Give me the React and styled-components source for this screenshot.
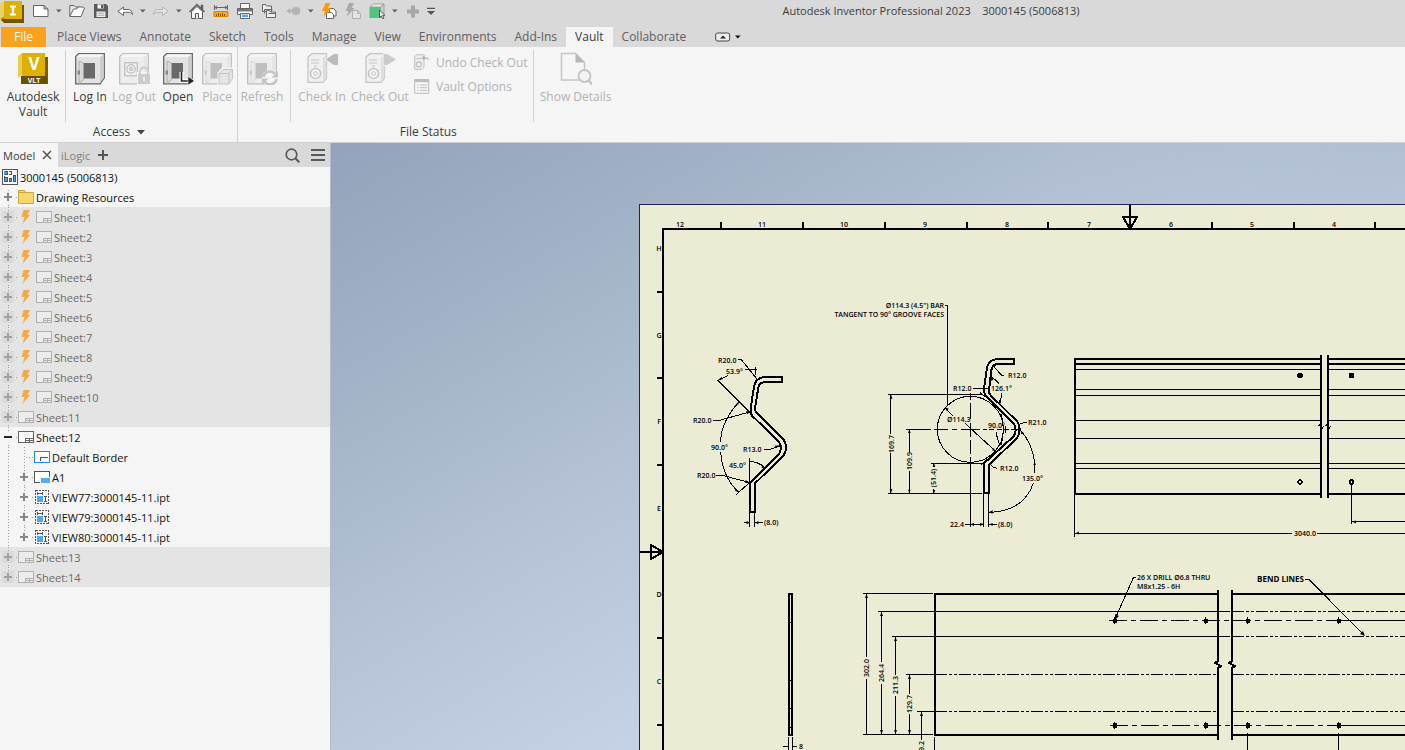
import React from "react";
import styled, { createGlobalStyle } from "styled-components";

const theme = {
  chrome: "#d9d9d9",
  panel: "#f5f5f5",
  shaded: "#e4e4e4",
  line: "#d0d0d0",
  ink: "#3c3c3c",
  soft: "#606060",
  muted: "#b2b2b2",
  orange: "#faa21b",
  paper: "#ececd5",
};

const GlobalStyle = createGlobalStyle`
  * {
    box-sizing: border-box;
  }
  body {
    margin: 0;
    font-family: "Open Sans", "Noto Sans", sans-serif;
    font-size: 12px;
    color: ${theme.ink};
    background: ${theme.panel};
  }
  button {
    font: inherit;
    color: inherit;
    border: 0;
    padding: 0;
    background: none;
  }
  svg {
    display: block;
    flex-shrink: 0;
  }
`;

const Window = styled.div`
  min-height: 100vh;
  display: flex;
  flex-direction: column;
`;

/* ---------- title bar ---------- */

const TitleBar = styled.header`
  display: flex;
  align-items: center;
  height: 27px;
  padding-bottom: 6px;
  background: ${theme.chrome};
`;

const Logo = styled.div`
  align-self: flex-start;
  width: 24px;
  height: 21px;
  margin-right: 5px;
`;

const ToolButton = styled.button`
  display: flex;
  justify-content: center;
  width: ${(p) => (p.$narrow ? 12 : 24)}px;
`;

const Title = styled.h1`
  flex: 1;
  margin: 0;
  padding-left: 20px;
  font-size: 11px;
  font-weight: 400;
  line-height: 21px;
  text-align: center;
  white-space: pre;
`;

const Caret = ({ color = "#606060" }) => (
  <svg width="6" height="4" viewBox="0 0 6 4">
    <path d="M0 0.5h5.6L2.8 3.6z" fill={color} />
  </svg>
);

const icons = {
  New: (
    <path d="M.5 2.500h10.500l4 3.500v7.500H.5zM11 2.500v3.500h4" fill="#fff" stroke="#666" />
  ),
  "Open file": (
    <g stroke="#666" strokeLinejoin="round">
      <path d="M.8 13V2.500h4.200l1.500 1.500h4v2" fill="#e8e8e8" />
      <path d="M.8 13.500L4.500 6h3l1.500-2h5l1.500 1-3.500 8.500z" fill="#fff" />
    </g>
  ),
  Save: (
    <g>
      <path d="M1 1h12l2 2v12H1z" fill="#5a5a5a" />
      <path d="M4.500 1.500h6v4h-6z" fill="#fff" />
      <path d="M8 2h2v3H8z" fill="#5a5a5a" />
      <path d="M3.500 8.500h9V14h-9z" fill="#f2f2f2" />
      <path d="M4.500 10.300h7M4.500 12.300h7" stroke="#aaa" />
    </g>
  ),
  Undo: (
    <path
      d="M.8 8.300L6.500 4v2.500h4.500c2.500 0 4 1.500 4.500 5-1-1.800-2.200-2.200-4.500-2.200H6.500v3.200z"
      fill="#fff"
      stroke="#666"
    />
  ),
  Redo: (
    <path
      d="M15.200 8.300L9.500 4v2.500H5c-2.500 0-4 1.500-4.500 5 1-1.800 2.200-2.200 4.500-2.200h4.500v3.200z"
      fill="#e6e6e6"
      stroke="#b4b4b4"
    />
  ),
  Home: (
    <g stroke="#5c5c5c">
      <path d="M2.500 8.500L8 3.500l5.500 5v7H2.500z" fill="#fff" />
      <path d="M.5 9L8 1.500 15.500 9M12.500 5.500V2.500h1v4" fill="none" strokeWidth="1.400" />
      <path d="M6.500 15.500v-5h3v5" fill="#eee" />
    </g>
  ),
  Measure: (
    <g>
      <path d="M1.500 2v5M14.500 2v5M2 4.500h12M4 3L2 4.500 4 6M12 3l2 1.500L12 6" stroke="#666" fill="none" />
      <path d="M1 8.500h14v5H1z" fill="#fba51c" stroke="#d98300" />
      <path d="M3.500 11v2M5.500 10v3M7.500 11v2M9.500 10v3M11.500 11v2" stroke="#8a5a10" />
    </g>
  ),
  Print: (
    <g>
      <path d="M3.500.5h9v5h-9z" fill="#fff" stroke="#666" />
      <path d="M.5 5.500h15v6H.5z" fill="#fff" stroke="#666" />
      <path d="M1 6h14v2.500H1z" fill="#777" />
      <path d="M3.500 10.500h9v5h-9z" fill="#fff" stroke="#666" />
      <path d="M5 11.500h6v2.500H5z" fill="#55aaf0" />
    </g>
  ),
  Windows: (
    <g fill="#eee" stroke="#666">
      <path d="M1.500 8.500v-7h3l1 1.500h5v5.500z" />
      <path d="M3.500 10.500v-4h8" fill="none" />
      <path d="M5.500 14.500v-7h3l1 1.500h5v5.500z" />
      <path d="M7.500 10.500h7" />
    </g>
  ),
  Return: (
    <g fill="#b4b4b4">
      <circle cx="11" cy="8" r="4.300" />
      <path d="M1 8l4.500-3v2h4v2h-4v2z" />
    </g>
  ),
  Update: (
    <g>
      <path d="M8.500 9V5.500h4l2.500 2.500v5h-3" fill="#fff" stroke="#666" />
      <path d="M5.500 9.500h5l2 2v4h-7z" fill="#fff" stroke="#666" />
      <path d="M4.500 0h5L7 5h3L2.500 14 4 8H1z" fill="#fa9a10" />
    </g>
  ),
  "Local update": (
    <g>
      <path d="M7.500 7.500h5l3 3v5h-8zM12.500 7.500v3h3" fill="#e4e4e4" stroke="#b0b0b0" />
      <path d="M4 0h5L6.500 5h3L1.500 14 3.500 8H.5z" fill="#a9a9a9" />
    </g>
  ),
  Select: (
    <g>
      <path d="M1 4l3.500-3H15l-3.500 3z" fill="#eee" stroke="#888" strokeWidth=".7" />
      <path d="M11.500 4L15 1v10l-3.500 4z" fill="#ccc" stroke="#888" strokeWidth=".7" />
      <path d="M.5 4h11v11H.5z" fill="#52c47e" />
      <path d="M10.500 7v7.500l1.800-1.600 1.300 2.800 1.400-.7-1.300-2.600h2.200z" fill="#fff" stroke="#333" strokeWidth=".8" />
    </g>
  ),
  Add: <path d="M6 2.500h4v4h4v4h-4v4H6v-4H2v-4h4z" fill="#a6a6a6" />,
  "Customize toolbar": (
    <path d="M4 4.800h8v1.200H4zM4 8h8l-4 4z" fill="#555" />
  ),
};

const Tool = ({ name }) =>
  name === "|" ? (
    <ToolButton $narrow aria-label="More">
      <Caret />
    </ToolButton>
  ) : (
    <ToolButton aria-label={name} $narrow={name === "Customize toolbar"}>
      <svg width="16" height="16" viewBox="0 0 16 16" fill="none">
        {icons[name]}
      </svg>
    </ToolButton>
  );

const tools = [
  "New", "|", "Open file", "Save", "Undo", "|", "Redo", "|", "Home", "Measure",
  "Print", "Windows", "Return", "|", "Update", "Local update", "Select", "|",
  "Add", "Customize toolbar",
];

/* ---------- ribbon tabs ---------- */

const TabStrip = styled.nav`
  display: flex;
  height: 20px;
  padding-left: 1px;
  background: ${theme.chrome};
`;

const Tab = styled.button`
  padding: 0 9px;
  line-height: 20px;
  color: ${(p) => (p.$active ? theme.ink : theme.soft)};
  background: ${(p) => (p.$active ? theme.panel : "none")};
`;

const FileTab = styled(Tab)`
  width: 45px;
  margin-right: 2px;
  color: #fff;
  background: ${theme.orange};
`;

const Minimize = styled.button`
  display: flex;
  align-items: center;
  gap: 4px;
  margin-left: 20px;
`;

const tabs = [
  "Place Views", "Annotate", "Sketch", "Tools", "Manage", "View",
  "Environments", "Add-Ins", "Vault", "Collaborate",
];

/* ---------- ribbon ---------- */

const Ribbon = styled.section`
  display: flex;
  height: 96px;
  padding-left: 1px;
  background: ${theme.panel};
  border-bottom: 1px solid ${theme.line};
`;

const Group = styled.div`
  display: flex;
  flex-direction: column;
  & + & {
    border-left: 1px solid ${theme.line};
  }
`;

const GroupTools = styled.div`
  display: flex;
  flex: 1;
  padding: 3px 3px 0 0;
`;

const GroupTitle = styled.div`
  display: flex;
  justify-content: center;
  align-items: center;
  gap: 7px;
  line-height: 20px;
`;

const Divider = styled.span`
  width: 1px;
  margin: 0 2px 0 ${(p) => p.$gap || 0}px;
  background: ${theme.line};
`;

const BigButton = styled.button`
  display: flex;
  flex-direction: column;
  align-items: center;
  gap: 4px;
  width: ${(p) => p.$width}px;
  padding-top: 2px;
  line-height: 15px;
  white-space: nowrap;
  &:disabled {
    color: ${theme.muted};
  }
  &:disabled svg {
    opacity: 0.38;
  }
`;

const SmallButtons = styled.div`
  display: flex;
  flex-direction: column;
  padding: 0 5px;
`;

const SmallButton = styled.button`
  display: flex;
  align-items: center;
  gap: 6px;
  height: 24px;
  &:disabled {
    color: ${theme.muted};
  }
  &:disabled svg {
    opacity: 0.4;
  }
`;

const Icon32 = ({ children }) => (
  <svg width="32" height="33" viewBox="0 0 32 33" fill="none">
    {children}
  </svg>
);

const SafeBox = ({ closed }) => (
  <g>
    <path d="M1.700 4.500L4.800 1.700h25.500v24.300L26 31.800H1.700z" fill="#e2e2e2" stroke="#666" strokeWidth="1.300" />
    <path d="M26 5L29.700 2.200v23.800L26 31z" fill="#cdcdcd" />
    <path d="M2.500 5L5 2.300h24.500L26 5z" fill="#f6f6f6" />
    {closed ? (
      <g stroke="#777" strokeWidth="1.400">
        <path d="M6.700 10.700h12.600v13H6.700z" fill="#eee" />
        <circle cx="13" cy="17" r="4.200" />
        <circle cx="13" cy="17" r="1.500" />
      </g>
    ) : (
      <g>
        <path d="M9 11h12v15.500H9z" fill="#696969" />
        <path d="M5 9l4.500 2v16.500L5 31.500z" fill="#d8d8d8" stroke="#a4a4a4" strokeWidth=".8" />
        <path d="M3.500 18.500h2.500v4H3.500z" fill="#888" />
      </g>
    )}
  </g>
);

const VaultIcon = () => (
  <Icon32>
    <path d="M1 4l4-3v22l-4 3z" fill="#eccb52" />
    <path d="M28 5h3v27h-3z" fill="#7a6000" />
    <path d="M5 1h23v23H5z" fill="#e0b000" />
    <path d="M4 24h26v8H4z" fill="#6b5200" />
    <text x="17" y="18" fontSize="17" fontWeight="700" fill="#fff" textAnchor="middle">V</text>
    <text x="17" y="31" fontSize="7" fontWeight="700" fill="#fff" textAnchor="middle">VLT</text>
  </Icon32>
);

const LogOutIcon = () => (
  <Icon32>
    <SafeBox closed />
    <path d="M19 20h13v13H19z" fill="#f5f5f5" />
    <path d="M22 22v-2.500a4 4 0 0 1 8 0V22" stroke="#888" strokeWidth="1.800" />
    <path d="M20 22h12v10H20z" fill="#888" />
    <path d="M26 25v4" stroke="#fff" strokeWidth="1.500" />
  </Icon32>
);

const OpenIcon = () => (
  <Icon32>
    <SafeBox />
    <path d="M19.500 20v9h8" stroke="#fff" strokeWidth="4" />
    <path d="M19.500 20v9h8" stroke="#222" strokeWidth="1.600" />
    <path d="M26 24.500l6.500 4.500-6.500 4z" fill="#222" stroke="#fff" strokeWidth=".5" />
  </Icon32>
);

const PlaceIcon = () => (
  <Icon32>
    <SafeBox />
    <path d="M17.500 21l4-4.500h11v10.500L28 32.500H17.500z" fill="#ddd" stroke="#f5f5f5" strokeWidth="2" />
    <path d="M18 21.500L22 17.500h9.500v9L28 32H18z" fill="#ccc" stroke="#777" />
    <path d="M18 21.500h10V32M28 21.500l3.500-4" stroke="#777" />
  </Icon32>
);

const RefreshIcon = () => (
  <Icon32>
    <SafeBox />
    <circle cx="24" cy="26" r="8" fill="#f5f5f5" />
    <path d="M17.500 25a6.500 6.500 0 0 1 11.500-3M30.500 27a6.500 6.500 0 0 1-11.500 3" stroke="#777" strokeWidth="2.600" />
    <path d="M32 19v6.500h-6.500zM16 33v-6.500h6.500z" fill="#777" />
  </Icon32>
);

const Speaker = () => (
  <g>
    <path d="M2 5l4-3.300h14.500v24.300L17 30.300H2z" fill="#e8e8e8" stroke="#777" strokeWidth="1.300" />
    <path d="M17 6l3.500-4v24L17 30z" fill="#bbb" />
    <path d="M5 8h8M5 11h8" stroke="#777" />
    <circle cx="9.500" cy="21.500" r="5" fill="#fff" stroke="#777" strokeWidth="1.600" />
    <circle cx="9.500" cy="21.500" r="2" stroke="#777" />
    <path d="M8 13.500h3L9.500 15.500z" fill="#777" />
  </g>
);

const CheckInIcon = () => (
  <Icon32>
    <Speaker />
    <path d="M33 1.500H28L19 7.500l9 6h5z" fill="#606060" stroke="#f5f5f5" />
  </Icon32>
);

const CheckOutIcon = () => (
  <Icon32>
    <Speaker />
    <path d="M19 1.500h4l10 6-10 6h-4z" fill="#888" stroke="#f5f5f5" />
  </Icon32>
);

const DetailsIcon = () => (
  <Icon32>
    <path d="M1.500 1.500h14l9 9v17.500H1.500z" fill="#fafafa" stroke="#777" strokeWidth="1.400" />
    <path d="M15.500 1.500v9h9z" fill="#555" />
    <circle cx="24.500" cy="24" r="6" fill="#f0f0f0" stroke="#777" strokeWidth="1.800" />
    <path d="M28.500 28.500l4 4" stroke="#777" strokeWidth="2.500" />
  </Icon32>
);

const UndoCheckOutIcon = () => (
  <svg width="16" height="16" viewBox="0 0 16 16" fill="none">
    <path d="M.7 2.500L3 .8h7V13L8 15.300H.7z" fill="#e4e4e4" stroke="#777" />
    <path d="M2.500 4.500H7" stroke="#777" />
    <circle cx="4.800" cy="10.500" r="2.500" stroke="#777" strokeWidth="1.300" />
    <path d="M7 4l4-3.500V3c3 0 4.500 1 4.500 4-1-1.500-2-2-4.500-2v2.500z" fill="#555" stroke="#f5f5f5" strokeWidth=".5" />
  </svg>
);

const OptionsIcon = () => (
  <svg width="16" height="16" viewBox="0 0 16 16" fill="none">
    <path d="M.7 1.500h14v13.800H.7z" fill="#fafafa" stroke="#666" />
    <path d="M.7 1h14v3.200H.7z" fill="#666" />
    <path d="M3 7h1.500M6 7h7M3 9.700h1.500M6 9.700h7M3 12.400h1.500M6 12.400h7" stroke="#666" />
  </svg>
);

/* ---------- browser panel ---------- */

const Main = styled.main`
  display: flex;
  flex: 1;
`;

const Browser = styled.aside`
  width: 331px;
  flex-shrink: 0;
  border-right: 1px solid #b4bccb;
  font-size: 11px;
  background: ${theme.panel};
`;

const BrowserTabs = styled.div`
  display: flex;
  align-items: center;
  height: 24px;
  background: ${theme.chrome};
`;

const BrowserTab = styled.div`
  display: flex;
  align-items: center;
  justify-content: space-between;
  gap: 6px;
  height: 24px;
  padding: 0 5px 0 3px;
  width: ${(p) => (p.$active ? "58px" : "auto")};
  color: ${(p) => (p.$active ? theme.ink : "#808080")};
  background: ${(p) => (p.$active ? theme.panel : "none")};
`;

const IconButton = styled.button`
  display: flex;
  justify-content: center;
  width: ${(p) => (p.$wide ? 25 : 14)}px;
`;

const Spacer = styled.span`
  flex: 1;
`;

const Tree = styled.ul`
  margin: 0;
  padding: 0;
  list-style: none;
`;

const Row = styled.li`
  display: flex;
  align-items: center;
  height: 20px;
  padding-left: ${(p) => (p.$root ? 2 : 0)}px;
  color: ${(p) => (p.$off ? "#6a6a6a" : "#111")};
  background: ${(p) => (p.$off ? theme.shaded : "none")};
  svg.faded {
    opacity: 0.4;
  }
`;

const RowLabel = styled.span`
  padding: 2px 0 0 2px;
  line-height: 18px;
`;

const Guide = () => (
  <svg width="16" height="20">
    <path d="M8.500 0v20" stroke="#a0a0a0" strokeDasharray="1 2" shapeRendering="crispEdges" />
  </svg>
);

const Toggle = ({ sign, off, last, first }) => (
  <svg width="18" height="20" shapeRendering="crispEdges">
    <path
      d={`M8.500 ${first ? 3 : 0}V${last ? 10 : 20}M10 10.500h8`}
      stroke="#a0a0a0"
      strokeDasharray="1 2"
    />
    {sign && <path d="M2 4h12v12H2z" fill={off ? "#dadada" : theme.panel} />}
    {sign && <path d="M4 9h8v2H4z" fill={sign === "-" ? "#222" : off ? "#a2a2a2" : "#888"} />}
    {sign === "+" && <path d="M7 6h2v8H7z" fill={off ? "#a2a2a2" : "#888"} />}
  </svg>
);

const BoltIcon = () => (
  <svg width="18" height="20" viewBox="0 0 18 20">
    <path d="M5.500 3H12L9.500 8H12L4.500 17l2-7H3.500z" fill="#f3a945" />
  </svg>
);

const SheetIcon = ({ faded }) => (
  <svg className={faded ? "faded" : undefined} width="16" height="12" viewBox="0 0 16 12" fill="none" shapeRendering="crispEdges">
    <path d="M.5.5h15v11H.5z" stroke="#666" fill="#fafafa" />
    <path d="M7.500 11.500v-4h8M7.500 9.500h8M11.500 7.500v4" stroke="#666" />
  </svg>
);

const nodeIcons = {
  root: (
    <svg width="16" height="16" viewBox="0 0 16 16" fill="none" shapeRendering="crispEdges">
      <path d="M.5.5h15v15H.5z" fill="#fff" stroke="#555" />
      <path d="M2 2h4v4H2zM2 9h4v4H2zM7 10h3v3H7zM11 7h3v6h-3z" fill="#4aa3e6" />
      <path d="M2.500 2.500h3v3h-3M7 2.500h2v3H7M2.500 7v5.500h3v-4h-3M7.500 9.500h2v3h-2zM11.500 6.500h2v6h-2z" stroke="#555" />
    </svg>
  ),
  folder: (
    <svg width="16" height="14" viewBox="0 0 16 14">
      <path d="M.5.500h6l1 2h8v11H.5z" fill="#f5d76e" stroke="#c9a640" />
      <path d="M1 2.500h6.500" stroke="#c9a640" />
    </svg>
  ),
  border: (
    <svg width="16" height="12" viewBox="0 0 16 12" fill="none" shapeRendering="crispEdges">
      <path d="M.5.500h15v11H.5z" fill="#fff" stroke="#1e8be0" />
      <path d="M6.500 10V6.500H14" stroke="#555" />
    </svg>
  ),
  title: (
    <svg width="16" height="12" viewBox="0 0 16 12" fill="none" shapeRendering="crispEdges">
      <path d="M6 11.500H.5V.500h15V6" fill="#fff" stroke="#555" />
      <path d="M7 7h9v5H7z" fill="#5aaee8" />
    </svg>
  ),
  view: (
    <svg width="16" height="14" viewBox="0 0 16 14" fill="none" shapeRendering="crispEdges">
      <path d="M1.500.500h13v13h-13z" stroke="#555" strokeDasharray="2 1" />
      <path d="M3 6h6v6H3z" fill="#4fa8e8" />
      <path d="M3.500 2v3M8.500 2v3M4 3.500h4M10 6.500h3M10 11.500h3M11.500 7v4" stroke="#555" />
    </svg>
  ),
};

const sheet = (n, bolt) => ({ label: `Sheet:${n}`, sign: "+", off: true, bolt });

const nodes = [
  { label: "Drawing Resources", sign: "+", icon: "folder", first: true },
  ...[1, 2, 3, 4, 5, 6, 7, 8, 9, 10].map((n) => sheet(n, true)),
  sheet(11),
  { label: "Sheet:12", sign: "-" },
  { label: "Default Border", icon: "border", child: true },
  { label: "A1", sign: "+", icon: "title", child: true },
  { label: "VIEW77:3000145-11.ipt", sign: "+", icon: "view", child: true },
  { label: "VIEW79:3000145-11.ipt", sign: "+", icon: "view", child: true },
  { label: "VIEW80:3000145-11.ipt", sign: "+", icon: "view", child: true, last: true },
  sheet(13),
  { ...sheet(14), last: true },
];

const TreeNode = ({ node }) => (
  <Row $off={node.off} role="treeitem">
    {node.child && <Guide />}
    <Toggle sign={node.sign} off={node.off} last={node.last} first={node.first} />
    {node.bolt && <BoltIcon />}
    {node.icon ? nodeIcons[node.icon] : <SheetIcon faded={node.off} />}
    <RowLabel>{node.label}</RowLabel>
  </Row>
);

/* ---------- drawing ---------- */

const Canvas = styled.section`
  display: flex;
  flex: 1;
  min-width: 0;
  overflow: hidden;
  background: radial-gradient(
      ellipse 40% 60% at 100% 0%,
      rgba(160, 176, 200, 0.4),
      rgba(160, 176, 200, 0) 80%
    ),
    linear-gradient(150deg, #94a3bb 0%, #a4b3c8 22%, #b9c6da 46%, #c7d3e6 66%);
`;

const Sheet = styled.svg`
  flex: 1;
  min-width: 0;
  font-family: "Open Sans", "Noto Sans", sans-serif;
  font-size: 7px;
  font-weight: 600;
  shape-rendering: crispEdges;
  path,
  circle {
    fill: none;
    stroke: #000;
    vector-effect: non-scaling-stroke;
  }
  .thick {
    stroke-width: 2px;
  }
  .solid {
    fill: #000;
  }
  .arrow {
    fill: #000;
    stroke: none;
    shape-rendering: auto;
  }
  .chain {
    stroke-dasharray: 12 2 3 2 3 2;
  }
  .centre {
    stroke-dasharray: 18 4 5 4;
  }
  .break {
    stroke-linejoin: round;
  }
`;

const Dim = ({ x, y, up, ...rest }) => (
  <text
    x={x}
    y={y}
    {...(up ? { transform: `rotate(-90 ${x} ${y})`, textAnchor: "middle" } : {})}
    {...rest}
  />
);

// sections are plotted at three units to the pixel
const Plot = ({ x, y, children }) => (
  <g transform={`translate(${x} ${y}) scale(0.33333)`}>{children}</g>
);

const columns = [12, 11, 10, 9, 8, 7, 6, 5, 4];
const zones = ["H", "G", "F", "E", "D", "C"];

const Frame = () => (
  <g>
    <rect x="639" y="204" width="900" height="700" fill={theme.paper} />
    <path d="M639.500 760V204.500H1500" style={{ stroke: "#23234f" }} />
    <path className="thick" d="M663 760V229H1500" />
    <path
      className="thick"
      d="M721 222v7M803 222v7M885 222v7M967 222v7M1048 222v7M1212 222v7M1294 222v7M1375 222v7"
    />
    <path className="thick" d="M657 292h6M657 378h6M657 465h6M657 638h6M657 725h6" />
    <path className="thick" d="M1130 205v23M1123 217h14l-7 12z" />
    <path className="thick" d="M640 552h22M651 545v14l12-7z" />
    {columns.map((n, i) => (
      <text key={n} x={680 + Math.round(i * 81.75)} y="227" textAnchor="middle">
        {n}
      </text>
    ))}
    {zones.map((z, i) => (
      <text key={z} x="659" y={251 + Math.round(i * 86.6)} textAnchor="middle">
        {z}
      </text>
    ))}
  </g>
);

const BendSection = () => (
  <g>
    <Plot x={635} y={200}>
      <path
        className="thick"
        d="M440 531H388Q360 535 357 560L347 625Q345 640 352 648L432 725Q443 742 432 762L345 850V936H360V850L445 768Q462 742 445 718L366 640Q360 634 360 625L370 562Q373 548 388 547H440Z"
      />
      <path d="M308 480H320L365 536M330 508H366M363 500V525M278 527L248 542M248 540L345 637" />
      <path d="M233 662H250L347 635M312 606Q258 665 257 725M257 755Q262 830 310 876M303 884L347 845" />
      <path d="M386 748H405L437 737M343 775V850M345 785Q370 785 390 803M242 825L262 826L345 848" />
      <path d="M345 940V980M359 940V980M328 968H345M360 968H383" />
      <path className="arrow" d="M304 610L312 606L309 616ZM303 868L310 876L300 872ZM382 795L391 803L380 804ZM420 737L437 736L422 745ZM332 840L345 848L330 849ZM334 633L347 635L336 643ZM248 541L260 531L263 538ZM335 963L345 968L335 973ZM370 963L360 968L370 973Z" />
    </Plot>
    <Dim x={718} y={363}>R20.0</Dim>
    <Dim x={726} y={374}>53.9°</Dim>
    <Dim x={693} y={423}>R20.0</Dim>
    <Dim x={711} y={450}>90.0°</Dim>
    <Dim x={743} y={452}>R13.0</Dim>
    <Dim x={729} y={468}>45.0°</Dim>
    <Dim x={697} y={478}>R20.0</Dim>
    <Dim x={764} y={525}>(8.0)</Dim>
  </g>
);

const GrooveSection = () => (
  <g>
    <Plot x={820} y={290}>
      <path
        className="thick"
        d="M583 207H530Q503 210 500 240L492 295Q490 308 500 320L582 402Q592 418 582 438L492 520V610H508V524L592 443Q606 418 592 395L512 316Q506 308 507 300L514 240Q517 224 532 222H583Z"
      />
      <circle cx="451" cy="418" r="99" />
      <path d="M374 48H382V345M375 352L398 378M435 400L527 484" />
      <path d="M204 313H490M213 313V433M213 490V610M204 610H486" />
      <path d="M258 418H334M343 418H384M395 418H412M422 418H480M488 418H500M508 418H522M530 418H545M552 418H566M558 409V428M574 418H600" />
      <path d="M268 418V486M268 542V610M333 520H488M342 520V532M342 596V610" />
      <path d="M451 310V330M451 340V388M451 398V440M451 450V492M451 500V712M435 703H492M508 703H530M492 610V712M505 610V712" />
      <path d="M458 297H506M553 256H545L522 230M514 262Q527 268 537 281M545 308Q547 325 535 338" />
      <path d="M543 372Q557 418 543 466M530 427Q530 450 542 466M622 397L603 400L594 406M532 535L520 532L508 520" />
      <path d="M600 418Q640 465 644 520V548M640 580Q610 665 506 667M480 308L510 330M485 524L500 508" />
      <path className="arrow" d="M209 326L213 313L217 326ZM209 597L213 610L217 597ZM264 599L268 610L272 599ZM264 429L268 418L272 429ZM338 531L342 520L346 531ZM338 600L342 610L346 600ZM506 667L518 661L518 671ZM640 525L644 516L648 525ZM480 699L492 703L480 708ZM462 699L451 703L462 708ZM518 699L508 703L518 708Z" />
      <path className="arrow" d="M374 351L386 356L380 363ZM527 484L521 474L516 481ZM538 370L547 374L541 382ZM602 422L611 428L604 433ZM513 262L521 270L512 272ZM534 338L543 332L543 340Z" />
    </Plot>
    <Dim x={944} y={308} textAnchor="end">Ø114.3 (4.5") BAR</Dim>
    <Dim x={944} y={317} textAnchor="end">TANGENT TO 90° GROOVE FACES</Dim>
    <Dim x={1008} y={378}>R12.0</Dim>
    <Dim x={953} y={391}>R12.0</Dim>
    <Dim x={991} y={391}>126.1°</Dim>
    <Dim x={947} y={422}>Ø114.3</Dim>
    <Dim x={988} y={428}>90.0°</Dim>
    <Dim x={1028} y={425}>R21.0</Dim>
    <Dim x={1000} y={471}>R12.0</Dim>
    <Dim x={1022} y={481}>135.0°</Dim>
    <Dim x={950} y={527}>22.4</Dim>
    <Dim x={998} y={527}>(8.0)</Dim>
    <Dim x={894} y={444} up>169.7</Dim>
    <Dim x={912} y={461} up>109.9</Dim>
    <Dim x={936} y={478} up>(51.4)</Dim>
  </g>
);

const LongView = () => (
  <g>
    <path className="thick" d="M1321 359H1075V494H1321M1075 364H1321M1328 359H1500M1328 364H1500M1328 494H1500" />
    {[369, 389, 395, 420, 438, 463, 468].map((y) => (
      <path key={y} d={`M1075 ${y}.500H1321M1328 ${y}.500H1500`} />
    ))}
    <path className="thick break" d="M1321 355V498M1328 355V498" />
    <path className="break" d="M1318.500 426.500L1320 424L1322 429L1323.500 426.500M1325.500 426.500L1327 424L1329 429L1330.500 426.500" />
    <circle className="solid" cx="1300" cy="375.500" r="2.300" />
    <circle className="solid" cx="1351.500" cy="375.500" r="2.300" />
    <circle className="thick" cx="1300" cy="482" r="1.800" />
    <circle className="thick" cx="1351.500" cy="482" r="1.800" />
    <path d="M1351.500 484V524M1351.500 521.500H1500M1074.500 495V537M1074.500 533.500H1292M1317 533.500H1500" />
    <path className="arrow" d="M1075 533.500l4-2v3zM1352 521.500l4-1v3z" />
    <Dim x={1305} y={536} textAnchor="middle">3040.0</Dim>
  </g>
);

const holes = [1115, 1206, 1248, 1339];

const FlatView = () => (
  <g>
    <path className="thick" d="M789 594H792V735H789Z" />
    <path d="M789 622.500h3M789 680.500h3M789 708.500h3M789 727.500h3M788.500 737V760M792.500 737V760M783 746.500h5M793 746.500h4" />
    <Dim x={799} y={749}>8</Dim>

    <path className="thick" d="M1218 594H935V735H1218M1232 594H1500M1232 735H1500" />
    <path d="M863 593.500H933M878 611.500H1230M892 636.500H1230M906 674.500H935M917 711.500H935M863 734.500H933" />
    <path d="M866.500 594V657M866.500 679V734M881.500 612V662M881.500 684V734M895.500 637V675M895.500 696V734M909.500 675V694M909.500 714V734M921.500 712V740M934.500 737V760" />
    <path className="arrow" d="M865 598l1.500-4 1.500 4zM880 616l1.500-4 1.500 4zM894 641l1.500-4 1.500 4zM908 679l1.500-4 1.500 4zM920 716l1.500-4 1.500 4zM880 730l1.500 4 1.500-4zM894 730l1.500 4 1.500-4zM908 730l1.500 4 1.500-4z" />
    <path className="chain" d="M935 674.500H1218M935 711.500H1218M1232 611.500H1500M1232 636.500H1500M1232 674.500H1500M1232 711.500H1500" />
    <path className="centre" d="M1109 620.500H1339M1110 725.500H1339" />
    <path d="M1339 620.500H1500M1339 725.500H1500M1247.500 733V760M1338.500 733V760" />
    <path className="thick break" d="M1218 590V661L1215 663L1221 666L1218 668V740M1232 590V661L1229 663L1235 666L1232 668V740" />
    {holes.map((x) => (
      <g key={x}>
        <circle className="solid" cx={x} cy="621" r="2" />
        <circle className="solid" cx={x} cy="725.500" r="2" />
        <path d={`M${x - 0.5} 617v7M${x - 0.5} 722v7`} />
      </g>
    ))}
    <path d="M1136 577.500H1133.500L1115 619M1305 579.500H1309L1364 635" />
    <path className="arrow" d="M1115 620l0-6 4 2zM1365 636l-5-2 3-3z" />
    <Dim x={1137} y={580}>26 X DRILL Ø6.8 THRU</Dim>
    <Dim x={1137} y={589}>M8x1.25 - 6H</Dim>
    <Dim x={1304} y={582} textAnchor="end" fontSize="8" fontWeight="700">BEND LINES</Dim>
    <Dim x={869} y={668} up>302.0</Dim>
    <Dim x={884} y={673} up>264.4</Dim>
    <Dim x={898} y={685} up>211.3</Dim>
    <Dim x={912} y={704} up>129.7</Dim>
    <Dim x={924} y={746} up>9.2</Dim>
  </g>
);

const App = () => (
  <Window>
    <GlobalStyle />
    <TitleBar>
      <Logo>
        <svg width="24" height="24" viewBox="0 0 24 24">
          <path d="M4 5h20v18H4L0 19z" fill="#735600" />
          <path d="M0 4l4-3v16l-4 4z" fill="#edcf66" />
          <path d="M0 19l4-2h18v2z" fill="#b88e00" />
          <path d="M4 1h18v18H4z" fill="#e0b000" />
          <path d="M10 5.500h6v2h-1.800v6H16v2h-6v-2h1.800v-6H10z" fill="#fff" />
        </svg>
      </Logo>
      {tools.map((name, i) => (
        <Tool key={i} name={name} />
      ))}
      <Title>{"Autodesk Inventor Professional 2023    3000145 (5006813)"}</Title>
    </TitleBar>

    <TabStrip>
      <FileTab>File</FileTab>
      {tabs.map((tab) => (
        <Tab key={tab} $active={tab === "Vault"}>
          {tab}
        </Tab>
      ))}
      <Minimize aria-label="Minimize ribbon">
        <svg width="16" height="10" viewBox="0 0 16 10">
          <rect x=".7" y="1" width="14" height="8" rx="2" fill="#eee" stroke="#444" />
          <path d="M5 6.500h6L8 3.500z" fill="#222" />
        </svg>
        <Caret color="#111" />
      </Minimize>
    </TabStrip>

    <Ribbon>
      <Group>
        <GroupTools>
          <BigButton $width={64}>
            <VaultIcon />
            <span>Autodesk<br />Vault</span>
          </BigButton>
          <Divider />
          <BigButton $width={44}><Icon32><SafeBox /></Icon32>Log In</BigButton>
          <BigButton $width={44} disabled><LogOutIcon />Log Out</BigButton>
          <BigButton $width={44}><OpenIcon />Open</BigButton>
          <BigButton $width={34} disabled><PlaceIcon />Place</BigButton>
        </GroupTools>
        <GroupTitle>
          Access
          <svg width="8" height="5"><path d="M0 0h8L4 4.500z" fill="#444" /></svg>
        </GroupTitle>
      </Group>
      <Group>
        <GroupTools>
          <BigButton $width={48} disabled><RefreshIcon />Refresh</BigButton>
          <Divider $gap={4} />
          <BigButton $width={58} disabled><CheckInIcon />Check In</BigButton>
          <BigButton $width={58} disabled><CheckOutIcon />Check Out</BigButton>
          <SmallButtons>
            <SmallButton disabled><UndoCheckOutIcon />Undo Check Out</SmallButton>
            <SmallButton disabled><OptionsIcon />Vault Options</SmallButton>
          </SmallButtons>
          <Divider />
          <BigButton $width={80} disabled><DetailsIcon />Show Details</BigButton>
        </GroupTools>
        <GroupTitle>File Status</GroupTitle>
      </Group>
    </Ribbon>

    <Main>
      <Browser>
        <BrowserTabs>
          <BrowserTab $active>
            Model
            <IconButton aria-label="Close">
              <svg width="10" height="10"><path d="M1 1l8 8M9 1L1 9" stroke="#555" strokeWidth="1.500" /></svg>
            </IconButton>
          </BrowserTab>
          <BrowserTab>
            iLogic
            <IconButton aria-label="Add tab">
              <svg width="10" height="10"><path d="M5 0v10M0 5h10" stroke="#555" strokeWidth="2" /></svg>
            </IconButton>
          </BrowserTab>
          <Spacer />
          <IconButton $wide aria-label="Search">
            <svg width="15" height="15" viewBox="0 0 15 15" fill="none" stroke="#5a5a5a">
              <circle cx="6.500" cy="6.500" r="5.300" strokeWidth="1.700" />
              <path d="M10.300 10.300l4 4" strokeWidth="2" />
            </svg>
          </IconButton>
          <IconButton $wide aria-label="Menu">
            <svg width="14" height="12"><path d="M0 1h14M0 6h14M0 11h14" stroke="#5a5a5a" strokeWidth="2" /></svg>
          </IconButton>
        </BrowserTabs>
        <Tree role="tree">
          <Row $root role="treeitem">
            {nodeIcons.root}
            <RowLabel>3000145 (5006813)</RowLabel>
          </Row>
          {nodes.map((node) => (
            <TreeNode key={node.label} node={node} />
          ))}
        </Tree>
      </Browser>

      <Canvas>
        <Sheet viewBox="331 143 1074 607" preserveAspectRatio="xMinYMin slice">
          <Frame />
          <BendSection />
          <GrooveSection />
          <LongView />
          <FlatView />
        </Sheet>
      </Canvas>
    </Main>
  </Window>
);

export default App;
